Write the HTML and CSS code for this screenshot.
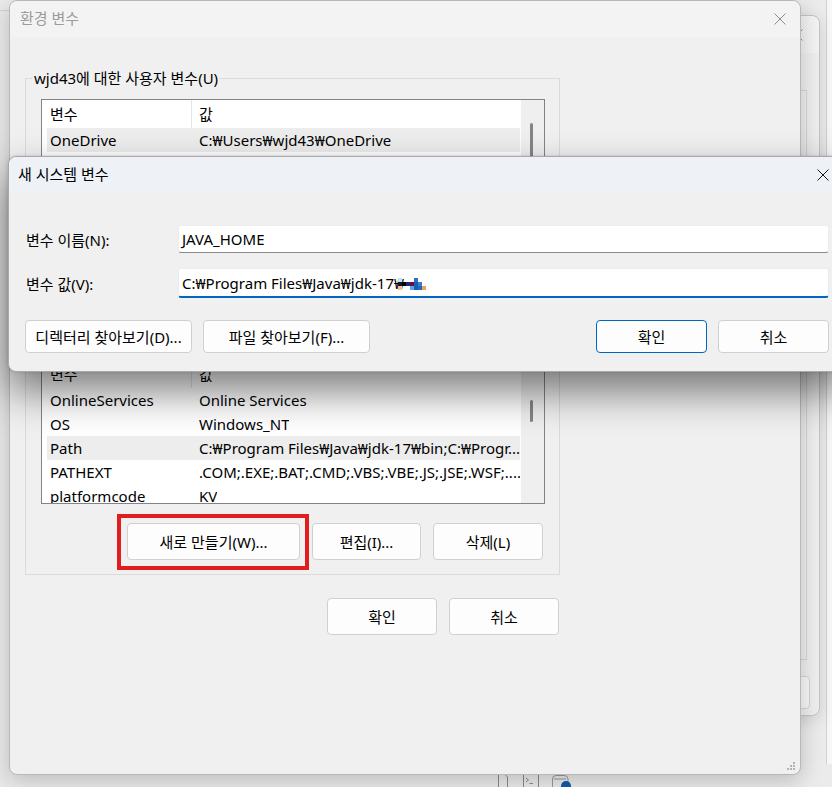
FILE: index.html
```html
<!DOCTYPE html>
<html lang="ko">
<head>
<meta charset="utf-8">
<link rel="stylesheet" href="styles.css">
</head>
<body>

<div class="win farleft"></div>
<div class="win far"></div>

<div class="win back">
  <div class="back-title">
    <span class="close">
      <svg width="12" height="12" viewBox="0 0 12 12"><path d="M0.5 0.5 L11.5 11.5 M11.5 0.5 L0.5 11.5" stroke="#8c8c8c" stroke-width="1"/></svg>
    </span>
  </div>
  <div class="back-body">
    <div class="back-panel"></div>
    <div class="back-btn"></div>
  </div>
</div>

<svg class="dock" width="80" height="17" viewBox="0 0 80 17">
  <path d="M4.5 4.5 H11 L13.5 7 V17" fill="none" stroke="#8a8a8a"/>
  <path d="M4.5 4.5 V17" fill="none" stroke="#8a8a8a"/>
  <rect x="29.5" y="4.5" width="15" height="14" fill="none" stroke="#8a8a8a"/>
  <path d="M32 8 L34.5 10 L32 12 M35.5 13.5 H39" fill="none" stroke="#8a8a8a"/>
  <path d="M58.5 17 V9 Q58.5 5.5 62 5.5 H70 Q74 5.5 74 9 V13" fill="none" stroke="#9a9a9a"/>
  <path d="M60 9 H72" stroke="#9a9a9a"/>
  <circle cx="72" cy="16" r="5" fill="#0f5aa8"/>
</svg>

<div class="win main">
  <div class="titlebar">
    <span class="title">환경 변수</span>
    <span class="close">
      <svg width="12" height="12" viewBox="0 0 12 12"><path d="M0.5 0.5 L11.5 11.5 M11.5 0.5 L0.5 11.5" stroke="#8c8c8c" stroke-width="1"/></svg>
    </span>
  </div>

  <div class="content">
    <fieldset class="group g1">
      <legend>wjd43에 대한 사용자 변수(U)</legend>
      <div class="list l1">
        <div class="list-body">
          <div class="row head"><span class="c1">변수</span><span class="c2">값</span></div>
          <div class="row sel"><span class="c1">OneDrive</span><span class="c2">C:₩Users₩wjd43₩OneDrive</span></div>
        </div>
        <div class="vscroll"><i class="thumb"></i></div>
      </div>
    </fieldset>

    <fieldset class="group g2">
      <div class="list l2">
        <div class="list-body">
          <div class="row head"><span class="c1">변수</span><span class="c2">값</span></div>
          <div class="row"><span class="c1">OnlineServices</span><span class="c2">Online Services</span></div>
          <div class="row"><span class="c1">OS</span><span class="c2">Windows_NT</span></div>
          <div class="row sel"><span class="c1">Path</span><span class="c2">C:₩Program Files₩Java₩jdk-17₩bin;C:₩Progr...</span></div>
          <div class="row"><span class="c1">PATHEXT</span><span class="c2">.COM;.EXE;.BAT;.CMD;.VBS;.VBE;.JS;.JSE;.WSF;....</span></div>
          <div class="row"><span class="c1">platformcode</span><span class="c2">KV</span></div>
        </div>
        <div class="vscroll"><i class="thumb"></i></div>
      </div>
      <div class="btnrow">
        <span class="mark"><button class="btn w-new">새로 만들기(W)...</button></span>
        <button class="btn w-edit">편집(I)...</button>
        <button class="btn w-del">삭제(L)</button>
      </div>
    </fieldset>

    <div class="btnrow main-btns">
      <button class="btn w-main">확인</button>
      <button class="btn w-main">취소</button>
    </div>
  </div>

  <svg class="grip" width="9" height="9" viewBox="0 0 9 9">
    <rect x="6" y="0" width="2" height="2" fill="#b3b3b3"/>
    <rect x="3" y="3" width="2" height="2" fill="#b3b3b3"/>
    <rect x="6" y="3" width="2" height="2" fill="#b3b3b3"/>
    <rect x="0" y="6" width="2" height="2" fill="#b3b3b3"/>
    <rect x="3" y="6" width="2" height="2" fill="#b3b3b3"/>
    <rect x="6" y="6" width="2" height="2" fill="#b3b3b3"/>
  </svg>
</div>

<div class="win dialog">
  <div class="dlg-title">
    <span class="title">새 시스템 변수</span>
    <span class="close">
      <svg width="12" height="12" viewBox="0 0 12 12"><path d="M0.5 0.5 L11.5 11.5 M11.5 0.5 L0.5 11.5" stroke="#1a1a1a" stroke-width="1"/></svg>
    </span>
  </div>
  <div class="dlg-body">
    <div class="field">
      <label>변수 이름(N):</label>
      <div class="textbox">JAVA_HOME</div>
    </div>
    <div class="field">
      <label>변수 값(V):</label>
      <div class="textbox focus">C:₩Program Files₩Java₩jdk-17₩<svg class="blur" width="32" height="13" viewBox="0 0 32 13">
          <rect x="0" y="1" width="4" height="4" fill="#bfeaf4"/>
          <rect x="0" y="5" width="4" height="4" fill="#141433"/>
          <rect x="0" y="9" width="4" height="4" fill="#f2c48a"/>
          <rect x="4" y="5" width="4" height="4" fill="#000000"/>
          <rect x="8" y="5" width="4" height="4" fill="#1d2a78"/>
          <rect x="12" y="5" width="4" height="4" fill="#6b0f3e"/>
          <rect x="12" y="9" width="4" height="4" fill="#5aa4e8"/>
          <rect x="16" y="1" width="4" height="4" fill="#2f6fc0"/>
          <rect x="16" y="5" width="4" height="4" fill="#1e5cb0"/>
          <rect x="16" y="9" width="4" height="4" fill="#0f62b8"/>
          <rect x="20" y="5" width="4" height="4" fill="#3a7bd0"/>
          <rect x="20" y="9" width="4" height="4" fill="#1d6ac0"/>
          <rect x="24" y="9" width="4" height="4" fill="#eaa453"/>
        </svg></div>
    </div>
    <div class="dlg-btns">
      <div class="btn-group">
        <button class="btn w-browse">디렉터리 찾아보기(D)...</button>
        <button class="btn w-browse">파일 찾아보기(F)...</button>
      </div>
      <div class="btn-group">
        <button class="btn w-ok default">확인</button>
        <button class="btn w-ok">취소</button>
      </div>
    </div>
  </div>
</div>

</body>
</html>
```
FILE: styles.css
```css
body {
    margin: 0;
    width: 832px;
    height: 787px;
    overflow: hidden;
    position: relative;
    background-color: #ebebeb;
    font-family: "Noto Sans", "Noto Sans CJK KR", sans-serif;
    font-size: 15px;
    color: #000000;
}

/* windows on the desktop */
.win {
    position: absolute;
    box-sizing: border-box;
}
.farleft {
    left: -300px;
    top: 10px;
    width: 309px;
    height: 800px;
    border-top: 1px solid #d2d2d2;
    background-color: #e9e9e9;
}
.far {
    left: 826px;
    top: -1px;
    width: 200px;
    height: 765px;
    border-left: 1px solid #d0d0d0;
    background-color: #f7f7f7;
}
.back {
    left: 380px;
    top: 15px;
    width: 440px;
    height: 701px;
    border: 1px solid #c4c4c4;
    border-radius: 8px;
    background-color: #eeeeee;
    box-shadow: 0 4px 16px rgba(0, 0, 0, 0.12);
}
.back-title {
    height: 37px;
    background-color: #f3f3f3;
    border-radius: 8px 8px 0 0;
    display: flex;
    justify-content: flex-end;
}
.back-title .close {
    width: 44px;
}
.back-body {
    padding: 37px 12px 0 0;
    display: flex;
    flex-direction: column;
    align-items: flex-end;
}
.back-panel {
    width: 430px;
    height: 570px;
    border: 1px solid #d6d6d6;
    box-sizing: border-box;
}
.back-btn {
    margin-top: 16px;
    margin-right: -3px;
    width: 100px;
    height: 31px;
    border: 1px solid #d4d4d4;
    border-radius: 4px;
    background-color: #f7f7f7;
}
.dock {
    position: absolute;
    left: 494px;
    top: 770px;
}

.close {
    display: flex;
    align-items: center;
    justify-content: center;
}

/* main window */
.main {
    left: 9px;
    top: 0;
    width: 792px;
    height: 775px;
    border: 1px solid #b8b8b8;
    border-radius: 8px;
    background-color: #f0f0f0;
    box-shadow: 0 6px 22px rgba(0, 0, 0, 0.2);
}
.titlebar {
    height: 36px;
    background-color: #f3f3f3;
    border-radius: 8px 8px 0 0;
    display: flex;
    justify-content: space-between;
}
.titlebar .title {
    padding-left: 10px;
    line-height: 34px;
    color: #9b9b9b;
}
.titlebar .close {
    width: 40px;
}
.content {
    padding-left: 15px;
}
.group {
    margin: 0;
    width: 535px;
    min-width: 0;
    box-sizing: border-box;
    border: 1px solid #dadada;
    padding: 11px 14px 14px 15px;
}
.group legend {
    padding: 0 2px;
    margin-left: -9px;
    line-height: 20px;
}
.g1 {
    margin-top: 31px;
}
.g2 {
    margin-top: 13px;
    padding-top: 21px;
}

/* list views */
.list {
    display: flex;
    border: 1px solid #82828c;
    background-color: #ffffff;
    box-sizing: border-box;
}
.l1 {
    height: 210px;
}
.l2 {
    height: 145px;
}
.list-body {
    flex: 1;
    min-width: 0;
    overflow: hidden;
}
.row {
    display: flex;
    height: 24px;
    line-height: 24px;
    margin-left: 5px;
    margin-right: 1px;
    white-space: nowrap;
}
.row.head {
    height: 28px;
    line-height: 28px;
    margin-left: 0;
    padding-left: 5px;
}
.row.sel {
    background-color: #ededed;
}
.c1 {
    width: 145px;
    padding-left: 3px;
    box-sizing: border-box;
    flex: none;
}
.c2 {
    padding-left: 7px;
    overflow: hidden;
}
.head .c1 {
    border-right: 1px solid #e5e5e5;
}
.vscroll {
    width: 23px;
    background-color: #efefef;
    flex: none;
}
.thumb {
    display: block;
    width: 3px;
    height: 22px;
    margin-left: 9px;
    border-radius: 2px;
    background-color: #858585;
}
.l1 .thumb {
    margin-top: 23px;
    height: 60px;
}
.l2 .thumb {
    margin-top: 40px;
}

/* buttons */
.btn {
    font-family: inherit;
    font-size: 15px;
    color: #000000;
    background-color: #fdfdfd;
    border: 1px solid #d0d0d0;
    border-radius: 4px;
    padding: 0;
    box-sizing: border-box;
}
.btnrow {
    display: flex;
    justify-content: flex-end;
    gap: 12px;
    margin-top: 19px;
    margin-right: 2px;
}
.btnrow .btn {
    height: 37px;
}
.w-new {
    width: 173px;
}
.w-edit {
    width: 109px;
}
.w-del {
    width: 110px;
}
/* red annotation box drawn round the new button */
.mark {
    display: flex;
    border: 4px solid #e11d20;
    padding: 5px 5px 6px 6px;
    margin: -9px -9px -10px -10px;
}
.main-btns {
    width: 535px;
    margin-top: 23px;
    margin-right: 0;
    padding-right: 1px;
    box-sizing: border-box;
}
.w-main {
    width: 110px;
}
.grip {
    position: absolute;
    right: 4px;
    bottom: 3px;
}

/* new system variable dialog */
.dialog {
    left: 8px;
    top: 156px;
    width: 839px;
    border: 1px solid #a9a9a9;
    border-radius: 8px;
    background-color: #f0f0f0;
    box-shadow: 0 20px 40px rgba(0, 0, 0, 0.5), 0 0 3px rgba(0, 0, 0, 0.15);
}
.dlg-title {
    height: 36px;
    background-color: #eef2f7;
    border-radius: 8px 8px 0 0;
    display: flex;
    justify-content: space-between;
}
.dlg-title .title {
    padding-left: 9px;
    line-height: 34px;
}
.dlg-title .close {
    width: 46px;
}
.dlg-body {
    padding: 32px 17px 18px 16px;
}
.field {
    display: flex;
    align-items: center;
    margin-bottom: 15px;
}
.field label {
    width: 153px;
    padding-left: 1px;
    box-sizing: border-box;
    flex: none;
}
.textbox {
    flex: 1;
    height: 28px;
    line-height: 27px;
    padding-left: 3px;
    box-sizing: border-box;
    background-color: #ffffff;
    border: 1px solid #ececec;
    border-bottom-color: #8a8a8a;
    border-radius: 3px;
    white-space: nowrap;
}
.textbox.focus {
    height: 30px;
    line-height: 28px;
    border-bottom: 2px solid #0067c0;
}
.blur {
    vertical-align: -1px;
    margin-left: -6px;
}
.dlg-btns {
    display: flex;
    justify-content: space-between;
    margin-top: 22px;
}
.btn-group {
    display: flex;
    gap: 11px;
}
.dlg-btns .btn {
    height: 33px;
}
.w-browse {
    width: 167px;
}
.w-ok {
    width: 111px;
}
.default {
    border-color: #0067c0;
}
```
